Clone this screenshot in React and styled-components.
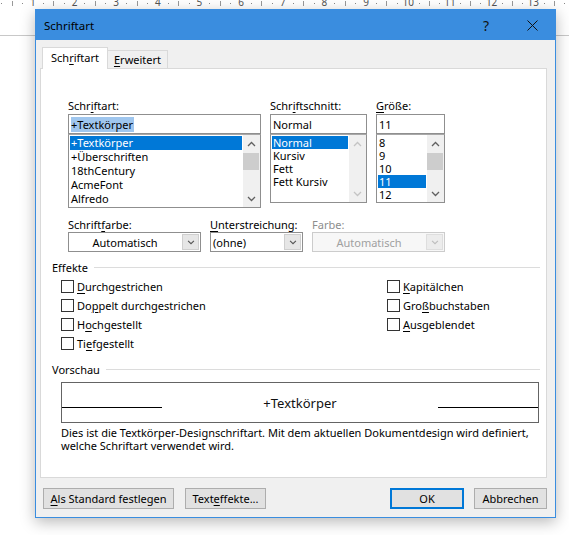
import React from 'react';
import styled, { createGlobalStyle } from 'styled-components';

const GlobalStyle = createGlobalStyle`
  html, body {
    margin: 0;
    padding: 0;
    background: #fff;
  }
  body {
    font-family: "Noto Sans", "Open Sans", sans-serif;
    font-size: 11px;
    color: #000;
  }
`;

const Desktop = styled.div`
  position: relative;
  width: 569px;
  height: 535px;
  overflow: hidden;
  background: #fff;
`;

const PageEdge = styled.div`
  position: absolute;
  left: 0;
  right: 0;
  top: 35px;
  height: 1px;
  background: #c8c8c8;
`;

const Ruler = styled.div`
  display: flex;
  height: 9px;
  overflow: hidden;
  margin-left: -14px;
`;

const RulerUnit = styled.div`
  flex: 0 0 41.67px;
  display: grid;
  grid-template-columns: repeat(4, 1fr);
  align-items: center;
  justify-items: center;
  height: 9px;
`;

const RulerNum = styled.span`
  font-size: 10px;
  line-height: 10px;
  color: #555;
  margin-top: -5px;
`;

const RulerDot = styled.span`
  width: 1px;
  height: 1px;
  background: #888;
  margin-top: -3px;
`;

const RulerTick = styled.span`
  width: 1px;
  height: 5px;
  background: #999;
  margin-top: -3px;
`;

const Dialog = styled.div`
  position: relative;
  z-index: 1;
  margin-left: 35px;
  width: 521px;
  height: 509px;
  box-sizing: border-box;
  border: 1px solid #3a8ddf;
  background: #f0f0f0;
  box-shadow: 0 4px 14px rgba(0, 0, 0, 0.28);
  display: flex;
  flex-direction: column;
`;

const TitleBar = styled.div`
  height: 30px;
  flex: 0 0 30px;
  background: #3a8ddf;
  display: flex;
  align-items: center;
  padding-left: 8px;
`;

const Title = styled.div`
  flex: 1;
  font-size: 11.5px;
  color: #000;
`;

const TitleButton = styled.div`
  width: 46px;
  height: 30px;
  display: flex;
  align-items: center;
  justify-content: center;
  color: #111;
  font-size: 14px;
`;

const Body = styled.div`
  flex: 1;
  display: flex;
  flex-direction: column;
  padding: 7px 8px 8px 4px;
`;

const TabRow = styled.div`
  display: flex;
  align-items: flex-end;
  padding-left: 2px;
  margin-bottom: -1px;
  position: relative;
  z-index: 1;
`;

const Tab = styled.div`
  box-sizing: border-box;
  width: ${(p) => p.$w}px;
  height: ${(p) => (p.$active ? 22 : 19)}px;
  border: 1px solid #d9d9d9;
  border-bottom: ${(p) => (p.$active ? 'none' : '1px solid #d9d9d9')};
  border-left: ${(p) => (p.$first ? '1px solid #d9d9d9' : 'none')};
  background: ${(p) => (p.$active ? '#fff' : '#f0f0f0')};
  display: flex;
  align-items: center;
  justify-content: center;
  padding-bottom: ${(p) => (p.$active ? 2 : 0)}px;
`;

const Panel = styled.div`
  box-sizing: border-box;
  height: 410px;
  flex: 0 0 410px;
  background: #fff;
  border: 1px solid #d9d9d9;
  display: flex;
  flex-direction: column;
`;

const Acc = styled.span`
  text-decoration: underline;
  text-underline-offset: 2px;
`;

const FontRow = styled.div`
  display: flex;
  gap: 9px;
  margin: 29px 0 0 27px;
`;

const Column = styled.div`
  display: flex;
  flex-direction: column;
  width: ${(p) => p.$w}px;
`;

const Label = styled.div`
  height: 15px;
  line-height: 15px;
  color: ${(p) => (p.$disabled ? '#8d8d8d' : '#000')};
  margin-bottom: ${(p) => p.$mb || 0}px;
  white-space: nowrap;
`;

const TextBox = styled.div`
  box-sizing: border-box;
  height: 20px;
  border: 1px solid #8f8f8f;
  background: #fff;
  display: flex;
  align-items: center;
  padding-left: 2px;
`;

const Selection = styled.span`
  background: #9fc6ee;
  line-height: 15px;
  padding: 0 1px 0 0;
`;

const List = styled.div`
  box-sizing: border-box;
  height: ${(p) => p.$h}px;
  border: 1px solid #8f8f8f;
  border-top-color: #a8a8a8;
  background: #fff;
  display: flex;
`;

const Items = styled.div`
  flex: 1;
  min-width: 0;
  padding: 1px;
  overflow: hidden;
`;

const Item = styled.div`
  height: ${(p) => p.$rh}px;
  line-height: ${(p) => p.$rh}px;
  padding-left: 1px;
  white-space: nowrap;
  overflow: hidden;
  background: ${(p) => (p.$sel ? '#0078d7' : 'transparent')};
  color: ${(p) => (p.$sel ? '#fff' : '#000')};
`;

const ScrollBar = styled.div`
  flex: 0 0 17px;
  display: flex;
  flex-direction: column;
  background: #f0f0f0;
`;

const ScrollArrow = styled.div`
  height: 17px;
  flex: 0 0 17px;
  display: flex;
  align-items: center;
  justify-content: center;
  color: ${(p) => (p.$disabled ? '#c4c4c4' : '#606060')};
`;

const ScrollTrack = styled.div`
  flex: 1;
  padding: 1px 1px 0 0;
`;

const Thumb = styled.div`
  height: 17px;
  background: #cdcdcd;
`;

const ColorRow = styled.div`
  display: flex;
  gap: 9px;
  margin: 9px 0 0 27px;
`;

const Combo = styled.div`
  box-sizing: border-box;
  height: 20px;
  border: 1px solid ${(p) => (p.$disabled ? '#cccccc' : '#8f8f8f')};
  background: ${(p) => (p.$disabled ? '#f7f7f7' : '#fff')};
  display: flex;
`;

const ComboText = styled.div`
  flex: 1;
  display: flex;
  align-items: center;
  justify-content: ${(p) => (p.$center ? 'center' : 'flex-start')};
  padding-left: ${(p) => (p.$center ? 0 : 2)}px;
  color: ${(p) => (p.$disabled ? '#a0a0a0' : '#000')};
`;

const ComboButton = styled.div`
  box-sizing: border-box;
  width: 17px;
  margin: 1px;
  background: ${(p) => (p.$disabled ? '#ececec' : '#e6e6e6')};
  border: 1px solid ${(p) => (p.$disabled ? '#dedede' : '#cfcfcf')};
  display: flex;
  align-items: center;
  justify-content: center;
  color: ${(p) => (p.$disabled ? '#bdbdbd' : '#555')};
`;

const GroupHeader = styled.div`
  display: flex;
  align-items: center;
  height: 15px;
  line-height: 15px;
  margin: ${(p) => p.$mt}px 6px 0 11px;

  &::after {
    content: '';
    flex: 1;
    height: 1px;
    background: #dcdcdc;
    margin-left: 6px;
  }
`;

const CheckGrid = styled.div`
  display: grid;
  grid-template-columns: 326px 1fr;
  grid-template-rows: repeat(4, 19px);
  grid-auto-flow: column;
  margin: 2px 0 0 20px;
`;

const CheckRow = styled.div`
  display: flex;
  align-items: center;
  white-space: nowrap;
`;

const Box = styled.span`
  box-sizing: border-box;
  width: 13px;
  height: 13px;
  border: 1px solid #333;
  background: #fff;
  margin-right: 3px;
`;

const Preview = styled.div`
  box-sizing: border-box;
  height: 41px;
  flex: 0 0 41px;
  margin: 5px 7px 0 20px;
  border: 1px solid #646464;
  display: flex;
  align-items: center;
`;

const PreviewText = styled.div`
  flex: 1;
  text-align: center;
  font-size: 13px;
  line-height: 18px;
  color: #111;
`;

const BaseLine = styled.div`
  flex: 0 0 100px;
  height: 1px;
  background: #000;
  transform: translateY(5px);
`;

const Description = styled.div`
  margin: 3px 0 0 20px;
  line-height: 13px;
  white-space: nowrap;
`;

const Footer = styled.div`
  display: flex;
  align-items: center;
  margin-top: 10px;
  padding-left: 3px;
`;

const Button = styled.div`
  box-sizing: border-box;
  width: ${(p) => p.$w}px;
  height: 21px;
  margin-left: ${(p) => p.$ml || 0}px;
  background: #e1e1e1;
  border: ${(p) => (p.$default ? '2px solid #0078d7' : '1px solid #adadad')};
  display: flex;
  align-items: center;
  justify-content: center;
  white-space: nowrap;
`;

const Spacer = styled.div`
  flex: 1;
`;

const acc = (text, i) =>
  i < 0 ? text : (
    <>
      {text.slice(0, i)}
      <Acc>{text[i]}</Acc>
      {text.slice(i + 1)}
    </>
  );

const Chevron = ({ up, w = 9, h = 6 }) => (
  <svg width={w} height={h} viewBox="0 0 9 6">
    <polyline
      points={up ? '1,5 4.5,1.5 8,5' : '1,1 4.5,4.5 8,1'}
      fill="none"
      stroke="currentColor"
      strokeWidth="1.3"
    />
  </svg>
);

const ListBox = ({ items, selected, h, rh, disabled }) => (
  <List $h={h}>
    <Items>
      {items.map((it) => (
        <Item key={it} $rh={rh} $sel={it === selected}>
          {it}
        </Item>
      ))}
    </Items>
    <ScrollBar>
      <ScrollArrow $disabled={disabled}>
        <Chevron up />
      </ScrollArrow>
      <ScrollTrack>{!disabled && <Thumb />}</ScrollTrack>
      <ScrollArrow $disabled={disabled}>
        <Chevron />
      </ScrollArrow>
    </ScrollBar>
  </List>
);

const Dropdown = ({ value, center, disabled }) => (
  <Combo $disabled={disabled}>
    <ComboText $center={center} $disabled={disabled}>
      {value}
    </ComboText>
    <ComboButton $disabled={disabled}>
      <Chevron w={8} h={5} />
    </ComboButton>
  </Combo>
);

const effects = [
  ['Durchgestrichen', 0],
  ['Doppelt durchgestrichen', 2],
  ['Hochgestellt', 1],
  ['Tiefgestellt', 2],
  ['Kapitälchen', 0],
  ['Großbuchstaben', 3],
  ['Ausgeblendet', 0],
];

const rulerNums = ['', '1', '2', '3', '4', '5', '6', '7', '8', '9', '10', '11', '12', '13', '14'];

const App = () => (
  <Desktop>
    <GlobalStyle />
    <PageEdge />
    <Ruler>
      {rulerNums.map((n, i) => (
        <RulerUnit key={i}>
          {n ? <RulerNum>{n}</RulerNum> : <RulerTick />}
          <RulerDot />
          <RulerTick />
          <RulerDot />
        </RulerUnit>
      ))}
    </Ruler>
    <Dialog>
      <TitleBar>
        <Title>Schriftart</Title>
        <TitleButton>?</TitleButton>
        <TitleButton>
          <svg width="11" height="11" viewBox="0 0 11 11">
            <path d="M0.5 0.5 L10.5 10.5 M10.5 0.5 L0.5 10.5" stroke="#111" strokeWidth="1" />
          </svg>
        </TitleButton>
      </TitleBar>
      <Body>
        <TabRow>
          <Tab $active $first $w={66}>{acc('Schriftart', 3)}</Tab>
          <Tab $w={60}>{acc('Erweitert', 0)}</Tab>
        </TabRow>
        <Panel>
          <FontRow>
            <Column $w={193}>
              <Label $mb={1}>{acc('Schriftart:', 4)}</Label>
              <TextBox>
                <Selection>+Textkörper</Selection>
              </TextBox>
              <ListBox
                items={['+Textkörper', '+Überschriften', '18thCentury', 'AcmeFont', 'Alfredo']}
                selected="+Textkörper"
                h={74}
                rh={14}
              />
            </Column>
            <Column $w={97}>
              <Label $mb={1}>{acc('Schriftschnitt:', 4)}</Label>
              <TextBox>Normal</TextBox>
              <ListBox
                items={['Normal', 'Kursiv', 'Fett', 'Fett Kursiv']}
                selected="Normal"
                h={69}
                rh={13}
                disabled
              />
            </Column>
            <Column $w={69}>
              <Label $mb={1}>{acc('Größe:', 0)}</Label>
              <TextBox>11</TextBox>
              <ListBox items={['8', '9', '10', '11', '12']} selected="11" h={69} rh={13} />
            </Column>
          </FontRow>
          <ColorRow>
            <Column $w={133}>
              <Label>{acc('Schriftfarbe:', 7)}</Label>
              <Dropdown value="Automatisch" center />
            </Column>
            <Column $w={93}>
              <Label>{acc('Unterstreichung:', 0)}</Label>
              <Dropdown value="(ohne)" />
            </Column>
            <Column $w={133}>
              <Label $disabled>Farbe:</Label>
              <Dropdown value="Automatisch" center disabled />
            </Column>
          </ColorRow>
          <GroupHeader $mt={8}>Effekte</GroupHeader>
          <CheckGrid>
            {effects.map(([t, i]) => (
              <CheckRow key={t}>
                <Box />
                {acc(t, i)}
              </CheckRow>
            ))}
          </CheckGrid>
          <GroupHeader $mt={9}>Vorschau</GroupHeader>
          <Preview>
            <BaseLine />
            <PreviewText>+Textkörper</PreviewText>
            <BaseLine />
          </Preview>
          <Description>
            Dies ist die Textkörper-Designschriftart. Mit dem aktuellen Dokumentdesign wird definiert,
            <br />
            welche Schriftart verwendet wird.
          </Description>
        </Panel>
        <Footer>
          <Button $w={131}>{acc('Als Standard festlegen', 0)}</Button>
          <Button $w={81} $ml={11}>{acc('Texteffekte...', 4)}</Button>
          <Spacer />
          <Button $w={74} $default>OK</Button>
          <Button $w={73} $ml={10}>Abbrechen</Button>
        </Footer>
      </Body>
    </Dialog>
  </Desktop>
);

export default App;
